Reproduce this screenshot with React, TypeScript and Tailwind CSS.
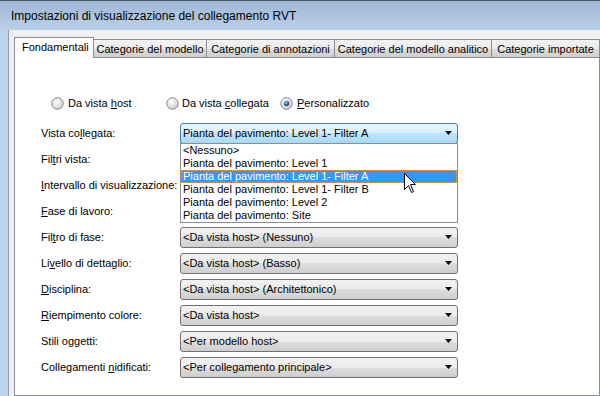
import React from "react";

const tabs = [
  { label: "Categorie del modello", w: "w-[113px]" },
  { label: "Categorie di annotazioni", w: "w-[128px]" },
  { label: "Categorie del modello analitico", w: "w-[157px]" },
  { label: "Categorie importate", w: "w-[108px]" },
];

const rows: { label: React.ReactNode; value: string }[] = [
  { label: <>Vista co<u>l</u>legata:</>, value: "Pianta del pavimento: Level 1- Filter A" },
  { label: <>Fil<u>t</u>ri vista:</>, value: "" },
  { label: <><u>I</u>ntervallo di visualizzazione:</>, value: "" },
  { label: <><u>F</u>ase di lavoro:</>, value: "" },
  { label: <>Fil<u>t</u>ro di fase:</>, value: "<Da vista host> (Nessuno)" },
  { label: <>Li<u>v</u>ello di dettaglio:</>, value: "<Da vista host> (Basso)" },
  { label: <><u>D</u>isciplina:</>, value: "<Da vista host> (Architettonico)" },
  { label: <><u>R</u>iempimento colore:</>, value: "<Da vista host>" },
  { label: <>Stili og<u>g</u>etti:</>, value: "<Per modello host>" },
  { label: <>Collegamenti <u>n</u>idificati:</>, value: "<Per collegamento principale>" },
];

const listItems = [
  "<Nessuno>",
  "Pianta del pavimento: Level 1",
  "Pianta del pavimento: Level 1- Filter A",
  "Pianta del pavimento: Level 1- Filter B",
  "Pianta del pavimento: Level 2",
  "Pianta del pavimento: Site",
];

function Arrow() {
  return (
    <svg width="7" height="4" viewBox="0 0 7 4" className="shrink-0">
      <path d="M0 0H7L3.5 4Z" fill="#000" />
    </svg>
  );
}

function Radio({ checked }: { checked?: boolean }) {
  return (
    <svg width="13" height="13" viewBox="0 0 13 13" className="shrink-0">
      <defs>
        <radialGradient id={checked ? "rg1" : "rg0"} cx="0.4" cy="0.35" r="0.7">
          <stop offset="0" stopColor="#ffffff" />
          <stop offset="1" stopColor="#c9c9c9" />
        </radialGradient>
        <radialGradient id="dot" cx="0.4" cy="0.35" r="0.7">
          <stop offset="0" stopColor="#9cd0f2" />
          <stop offset="0.6" stopColor="#2c6aa3" />
          <stop offset="1" stopColor="#163b66" />
        </radialGradient>
      </defs>
      <circle cx="6.5" cy="6.5" r="5.8" fill={checked ? "url(#rg1)" : "url(#rg0)"} stroke="#8a8c8e" strokeWidth="1" />
      {checked && <circle cx="6.5" cy="6.5" r="2.8" fill="url(#dot)" />}
    </svg>
  );
}

function Combo({ value, open }: { value: string; open?: boolean }) {
  return (
    <div
      className={`w-[278px] h-[21px] flex items-center justify-between pl-[2px] pr-[5px] border rounded-[3px] ${
        open
          ? "border-[#3c7fb1] bg-[linear-gradient(#eaf6fd,#d9f0fc_50%,#bee6fd_50%,#a7d9f5)]"
          : "border-[#707070] bg-[linear-gradient(#f2f2f2,#ebebeb_50%,#dddddd_50%,#cfcfcf)]"
      }`}
    >
      <span className="whitespace-nowrap">{value}</span>
      <Arrow />
    </div>
  );
}

export default function App() {
  return (
    <div className="w-[600px] h-[396px] relative overflow-hidden bg-[#bfd3ea] text-black text-[11px] font-['Liberation_Sans',Arial,sans-serif]">
      <div className="h-[30px] border-t border-[#4a5563] bg-[linear-gradient(#9db7d5,#bcd0e8)] pl-[11px] flex items-center text-[12px]">
        Impostazioni di visualizzazione del collegamento RVT
      </div>
      <div className="flex h-[366px]">
        <div className="w-[8px] shrink-0" />
        <div className="flex-1 border-l border-[#8b9cb0] bg-[#f0f0f0] pl-[5px] pt-[7px] flex flex-col">
          <div className="h-[20px] flex items-start relative z-10">
            <div className="w-[80px] h-[21px] bg-white border-l border-t border-r border-[#898c95] flex items-center pl-[7px] pb-[1px]">
              Fondamentali
            </div>
            {tabs.map((t) => (
              <div
                key={t.label}
                className={`${t.w} h-[18px] mt-[2px] shrink-0 border-t border-r border-[#898c95] bg-[linear-gradient(#f3f3f3,#ebebeb_50%,#dddddd_50%,#cfcfcf)] flex items-center justify-center whitespace-nowrap pt-[1px]`}
              >
                {t.label}
              </div>
            ))}
          </div>
          <div className="flex-1 border border-[#898c95] bg-white relative">
            <div className="mt-[39px] h-[13px] flex items-center pl-[36px]">
              <div className="w-[115px] flex items-center gap-[4px]">
                <Radio />
                <span>
                  Da vista <u>h</u>ost
                </span>
              </div>
              <div className="w-[114px] flex items-center gap-[3px]">
                <Radio />
                <span>
                  Da vista <u>c</u>ollegata
                </span>
              </div>
              <div className="flex items-center gap-[4px]">
                <Radio checked />
                <span>
                  <u>P</u>ersonalizzato
                </span>
              </div>
            </div>
            <div className="mt-[10px] pl-[26px] flex flex-col">
              {rows.map((r, i) => (
                <div key={i} className="h-[26px] flex items-center">
                  <div className="w-[139px] whitespace-nowrap pt-[1px]">{r.label}</div>
                  <Combo value={r.value} open={i === 0} />
                </div>
              ))}
            </div>
            <div className="absolute left-[165px] top-[85px] w-[278px] border border-[#8e8e8e] bg-white py-[0px]">
              {listItems.map((it, i) => (
                <div
                  key={it}
                  className={`h-[13px] leading-[11px] pl-[1px] whitespace-nowrap ${
                    i === 2
                      ? "bg-[#3399ff] text-white border border-dotted border-[#e0a060]"
                      : "border border-transparent"
                  }`}
                >
                  {it}
                </div>
              ))}
            </div>
          </div>
        </div>
      </div>
      <svg
        className="absolute left-[404px] top-[173px]"
        width="12"
        height="20"
        viewBox="0 0 12 20"
      >
        <path
          d="M0.5 0.5V16.5L4.5 12.5L7.5 19.5L9.5 18.5L6.5 11.5H11.5Z"
          fill="#fff"
          stroke="#000"
          strokeWidth="1"
          strokeLinejoin="miter"
        />
      </svg>
    </div>
  );
}
